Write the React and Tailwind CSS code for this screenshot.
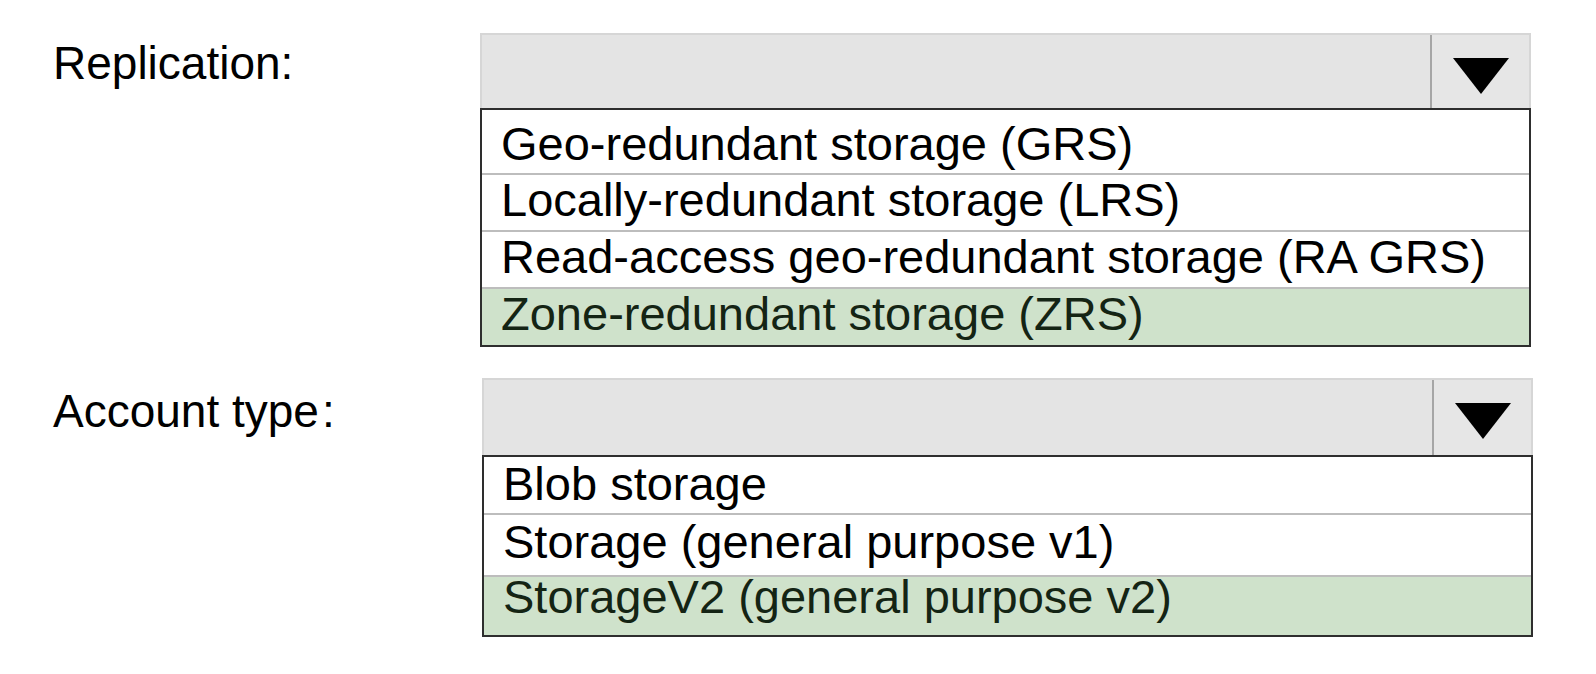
import React from "react";

const replication = [
  { label: "Geo-redundant storage (GRS)", rowClass: "h-[65px] pt-[5px] leading-[57px]" },
  { label: "Locally-redundant storage (LRS)", rowClass: "h-[57px] leading-[49px]" },
  { label: "Read-access geo-redundant storage (RA GRS)", rowClass: "h-[57px] leading-[49px]" },
  { label: "Zone-redundant storage (ZRS)", rowClass: "h-[56px] leading-[49px]", picked: true },
];

const accountTypes = [
  { label: "Blob storage", rowClass: "h-[58px] leading-[53px]" },
  { label: "Storage (general purpose v1)", rowClass: "h-[62px] leading-[53px]" },
  { label: "StorageV2 (general purpose v2)", rowClass: "h-[58px] leading-[40px]", picked: true },
];

const Caret = () => (
  <svg width="58" height="38" viewBox="0 0 58 38">
    <polygon points="1,1 57,1 29,37" fill="#000" />
  </svg>
);

const DropDown = ({ items, boxHeight }) => {
  return (
    <div className="flex flex-col w-[1051px]">
      <div
        className={`flex ${boxHeight} bg-[#e4e4e4] border-t-2 border-l-2 border-r-2 border-[#d6d6d6]`}
      >
        <div className="flex-1" />
        <div className="w-[99px] flex justify-center items-start pt-[22px] border-l-2 border-[#a6a6a6] bg-[#e6e6e6]">
          <Caret />
        </div>
      </div>
      <ul className="border-2 border-[#2e2e2e] bg-white">
        {items.map((item, index) => (
          <li
            key={index}
            className={`${item.rowClass} pl-[19px] overflow-visible ${
              index < items.length - 1 ? "border-b-2 border-[#bdbdbd]" : ""
            } ${
              item.picked
                ? "bg-[#cfe2cb] text-[#142414]"
                : "bg-white text-black"
            }`}
          >
            {item.label}
          </li>
        ))}
      </ul>
    </div>
  );
};

export default function App() {
  return (
    <div
      className="w-[1596px] h-[674px] bg-white pl-[53px] pt-[33px] text-[47px]"
      style={{ fontFamily: '"Liberation Sans", Arial, sans-serif' }}
    >
      <div className="flex">
        <div className="w-[427px] text-[46px] leading-[57px] mt-[2px]">
          Replication:
        </div>
        <DropDown items={replication} boxHeight="h-[75px]" />
      </div>
      <div className="flex mt-[31px]">
        <div className="w-[427px] text-[46px] leading-[57px] mt-[5px]">
          Account type<span className="ml-[3px]">:</span>
        </div>
        <div className="ml-[2px]">
          <DropDown items={accountTypes} boxHeight="h-[77px]" />
        </div>
      </div>
    </div>
  );
}
